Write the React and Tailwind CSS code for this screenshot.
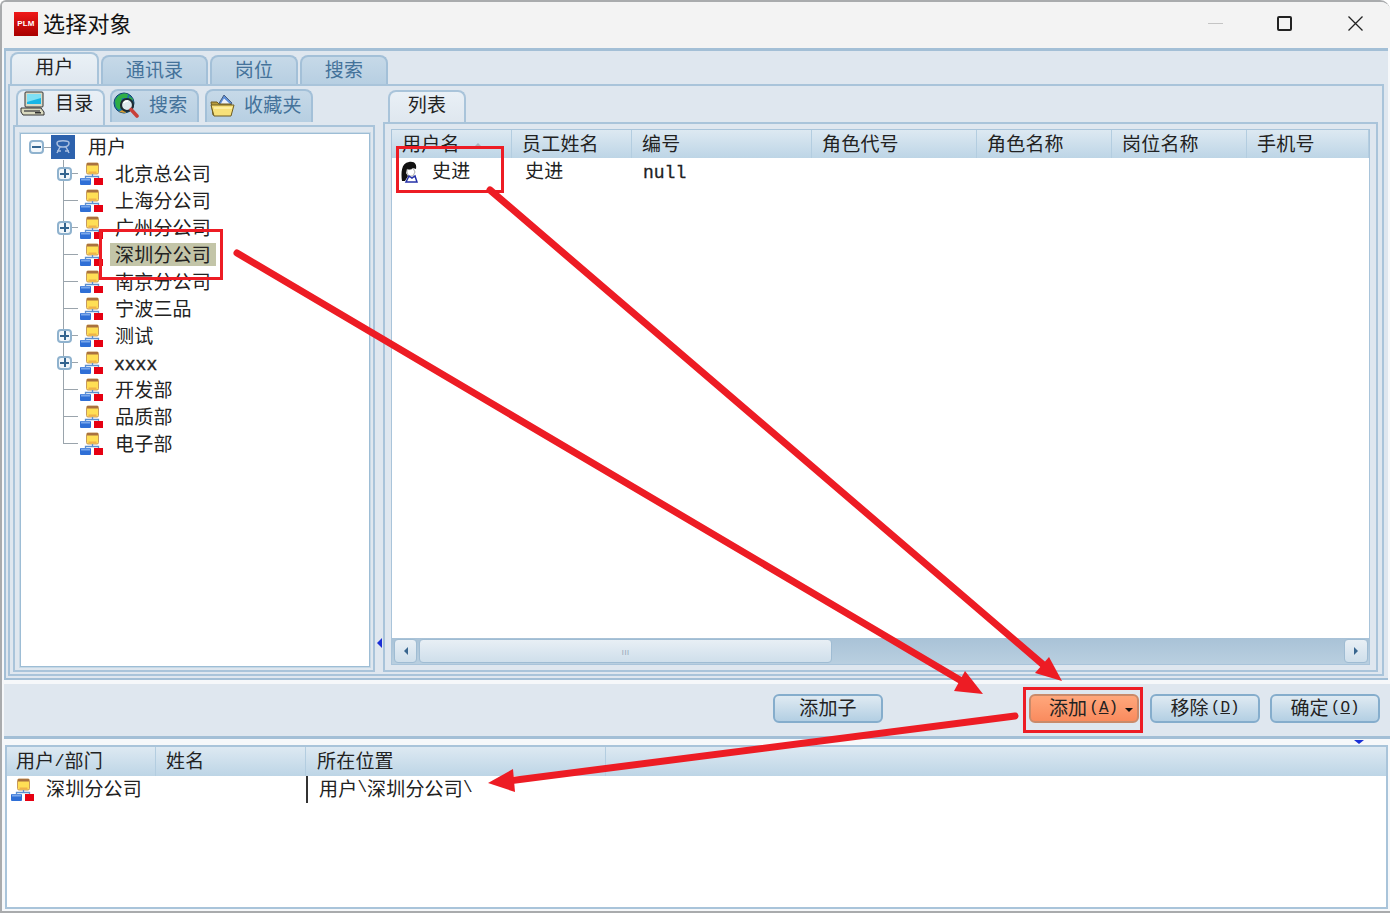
import React from "react";

const OrgIcon = ({ className = "" }) => (
  <svg viewBox="0 0 23 23" className={`w-[23px] h-[23px] shrink-0 ${className}`}>
    <rect x="6.5" y="1" width="12" height="11" rx="1.5" fill="#ffdf55" stroke="#c79a60" />
    <rect x="7" y="1" width="11" height="2.5" fill="#a9713f" />
    <rect x="8.5" y="9.5" width="8" height="2" fill="#f0b24a" />
    <path d="M12.5 12V14.5M5.5 16.5V14.5H18.5V16.5" fill="none" stroke="#5c8fcf" strokeWidth="1.3" />
    <rect x="0" y="16" width="11" height="7" rx="1" fill="#2f6fd6" />
    <rect x="1" y="16.5" width="9" height="2" fill="#7aa7ea" />
    <rect x="14" y="16" width="9" height="7" fill="#e60012" />
  </svg>
);

const Expander = ({ minus }) => (
  <span className="relative flex items-center justify-center w-[15px] h-[14px] bg-[#f2f7fb] border-2 border-[#8fb2ce] rounded-[4px] shrink-0 z-10">
    <span className="absolute w-[9px] h-[2px] bg-[#33648f]" />
    {!minus && <span className="absolute w-[2px] h-[9px] bg-[#33648f]" />}
  </span>
);

const ComputerIcon = () => (
  <svg viewBox="0 0 25 25" className="w-[25px] h-[25px] shrink-0">
    <rect x="5" y="1" width="18" height="15" rx="1" fill="#d6d9c6" stroke="#333" />
    <rect x="7" y="3" width="14" height="10" fill="#18b6e6" />
    <path d="M7 3H21V7L7 11Z" fill="#7fe0f5" />
    <path d="M1 17H21L24 21V24H3L1 21Z" fill="#d9d9bf" stroke="#333" />
    <path d="M4 20H20" stroke="#555" strokeWidth="1.5" />
    <rect x="15" y="21" width="6" height="1.5" fill="#333" />
  </svg>
);

const GlobeIcon = () => (
  <svg viewBox="0 0 26 26" className="w-[26px] h-[26px] shrink-0">
    <circle cx="11" cy="11" r="10" fill="#1d78a8" stroke="#14476b" />
    <path d="M2 9C4 3 10 0 15 2L14 6L9 6L8 10L10 13L6 18L3 15ZM16 4L20 7L19 9L16 8Z" fill="#2fae45" />
    <path d="M6 20L11 17L13 21Z" fill="#e0a030" />
    <circle cx="14" cy="13" r="6" fill="#dde9ee" stroke="#1d2b33" strokeWidth="2.2" />
    <path d="M10.5 11C11.5 9.5 13 9 15 9" stroke="#fff" strokeWidth="1.4" fill="none" />
    <path d="M18 17.5L24 24" stroke="#c8403a" strokeWidth="3.6" strokeLinecap="round" />
  </svg>
);

const FolderIcon = () => (
  <svg viewBox="0 0 25 25" className="w-[25px] h-[25px] shrink-0">
    <path d="M8 12L14 2L22 10L20 13Z" fill="#5d8fd8" stroke="#4a5f80" />
    <path d="M10 12L14 5.5L20 11L19 13Z" fill="#eef2f9" />
    <path d="M1 9H7L9 11H21V22H3Z" fill="#b69b3c" stroke="#6e5d22" />
    <path d="M1 12H24L21 23H4Z" fill="#f7e17a" stroke="#6e5d22" />
    <path d="M4 15H22" stroke="#fff3b0" strokeWidth="1.5" />
  </svg>
);

const RootIcon = () => (
  <svg viewBox="0 0 24 24" className="w-[24px] h-[24px] shrink-0">
    <rect width="24" height="24" fill="#2d62ad" />
    <path d="M6 8C6 5 18 5 18 8C18 11 15 12 12 12C9 12 6 11 6 8ZM9 12L6 18M15 12L18 18M10 16H6M18 16H14" fill="none" stroke="#a9bfe0" strokeWidth="1.5" />
  </svg>
);

const PersonIcon = () => (
  <svg viewBox="0 0 18 22" className="w-[18px] h-[22px] shrink-0">
    <path d="M2 20C1 12 1 2 9 1C15 0 17 4 16 8L13 7C11 9 8 9 7 8L6 12L8 15L5 20Z" fill="#111" />
    <path d="M7 8C9 9 11 9 13 7L15 11L13 15H9L7 12Z" fill="#fff" stroke="#555" strokeWidth="0.5" />
    <path d="M6 21L9 15L12 17L15 15L17 21Z" fill="#fff" stroke="#2430a8" strokeWidth="1.5" />
  </svg>
);

const treeRows = [
  { label: "北京总公司", plus: true },
  { label: "上海分公司" },
  { label: "广州分公司", plus: true },
  { label: "深圳分公司", selected: true },
  { label: "南京分公司" },
  { label: "宁波三品" },
  { label: "测试", plus: true },
  { label: "xxxx", plus: true, mono: true },
  { label: "开发部" },
  { label: "品质部" },
  { label: "电子部", last: true },
];

const TreeRow = ({ r }) => (
  <div className="relative flex items-center h-[27px] pl-[36px]">
    <span className={`absolute left-[42px] top-0 w-[1px] bg-[#9aa4ac] ${r.last ? "h-[14px]" : "h-full"}`} />
    <span className="absolute left-[42px] top-[13px] w-[15px] h-[1px] bg-[#9aa4ac]" />
    <span className="w-[15px] shrink-0 flex items-center">{r.plus && <Expander />}</span>
    <OrgIcon className="ml-[8px] relative" />
    <span
      className={`ml-[7px] h-[23px] whitespace-nowrap ${r.selected ? "bg-[#c3c5a8]" : ""} ${
        r.mono
          ? "font-['Liberation_Mono',monospace] text-[18px] tracking-normal pl-[4px] leading-[29px] [-webkit-text-stroke:0.4px_#222]"
          : "px-[5px] leading-[21px]"
      }`}
    >
      {r.label}
    </span>
  </div>
);

const topTabs = [
  { label: "用户", active: true, w: "w-[89px] h-[32px] pb-[7px]" },
  { label: "通讯录", w: "w-[107px] h-[29px] pb-[5px]" },
  { label: "岗位", w: "w-[88px] h-[29px] pb-[5px]" },
  { label: "搜索", w: "w-[88px] h-[29px] pb-[5px]" },
];

const subTabActive = "bg-gradient-to-b from-[#e9f0f6] to-[#dfe7ef] text-[#222] border-2 border-b-0 border-[#a9c4da] rounded-t-[8px]";
const subTabIdle = "bg-gradient-to-b from-[#c6d9e8] to-[#b7cfe2] text-[#44729a] border-2 border-b-0 border-[#a3c0d8] rounded-t-[8px]";

const listCols = [
  { label: "用户名", w: "w-[120px]", sort: true },
  { label: "员工姓名", w: "w-[120px]" },
  { label: "编号", w: "w-[180px]" },
  { label: "角色代号", w: "w-[165px]" },
  { label: "角色名称", w: "w-[135px]" },
  { label: "岗位名称", w: "w-[135px]" },
  { label: "手机号", w: "flex-1" },
];

const headerBg = "bg-gradient-to-b from-[#dde9f2] to-[#bdd5e6]";
const mono = "font-['Liberation_Mono',monospace] text-[16px] tracking-normal";

const Btn = ({ children, orange, className = "" }) => (
  <div
    className={`w-[110px] h-[29px] flex items-center justify-center pb-[4px] rounded-[6px] border-2 text-[#222] ${
      orange
        ? "border-[#c98a6a] bg-gradient-to-b from-[#ffa77c] to-[#f98b5e] relative"
        : "border-[#85adcc] bg-gradient-to-b from-[#dfeaf2] to-[#b3cfe3]"
    } ${className}`}
  >
    {children}
  </div>
);

const Key = ({ k }) => (
  <span className={`${mono} ml-[2px] mt-[3px]`}>
    (<span className="underline">{k}</span>)
  </span>
);

export default function App() {
  return (
    <div className="relative w-[1390px] h-[913px] overflow-hidden bg-[#f6f8fa] border-t-2 border-l-2 border-b-2 border-[#a9abad] rounded-tr-[10px] rounded-tl-[6px] text-[19px] tracking-[0.2px] leading-none text-[#222] font-['Noto_Sans_CJK_SC','Liberation_Sans',sans-serif]">
      {/* title bar */}
      <div className="flex items-center h-[46px] bg-[#f3f3f3]">
        <div className="ml-[12px] mb-[2px] w-[24px] h-[24px] flex items-center justify-center bg-gradient-to-b from-[#f01818] to-[#a80000] text-white text-[8px] font-bold font-['Liberation_Sans',sans-serif]">
          PLM
        </div>
        <div className="ml-[5px] pb-[6px] text-[22px] text-[#111]">选择对象</div>
        <div className="ml-auto flex items-center pb-[4px]">
          <span className="w-[15px] h-[1px] bg-[#c4c4c4] mr-[54px]" />
          <span className="w-[15px] h-[15px] border-2 border-[#222] rounded-[2px] mr-[56px]" />
          <svg viewBox="0 0 15 15" className="w-[15px] h-[15px] mr-[27px]">
            <path d="M0.5 0.5L14.5 14.5M14.5 0.5L0.5 14.5" stroke="#222" strokeWidth="1.3" />
          </svg>
        </div>
      </div>

      {/* main tab pane */}
      <div className="ml-[2px] w-[1384px] h-[632px] bg-[#dfe7ef] border-t-[3px] border-l-2 border-b-2 border-[#a3bfd6] flex flex-col">
        <div className="flex items-end h-[33px] pl-[4px] gap-[2px] shrink-0">
          {topTabs.map((t) => (
            <div
              key={t.label + t.w}
              className={`${t.w} flex items-center justify-center ${
                t.active
                  ? "bg-gradient-to-b from-[#eaf1f6] to-[#dfe7ef] text-[#222] border-2 border-b-0 border-[#a9c4da] rounded-t-[8px]"
                  : "bg-gradient-to-b from-[#c6d9e8] to-[#b7cfe2] text-[#44729a] border-2 border-b-0 border-[#a3c0d8] rounded-t-[8px]"
              }`}
            >
              {t.label}
            </div>
          ))}
        </div>
        <div className="ml-[2px] w-[1376px] h-[592px] border-2 border-[#a9c4da] flex pl-[3px] pt-[2px] shrink-0">
          {/* left pane */}
          <div className="w-[362px] h-[584px] flex flex-col shrink-0">
            <div className="flex items-end h-[37px] pl-[3px] shrink-0">
              <div className={`w-[89px] h-[36px] flex items-center pb-[9px] ${subTabActive} pl-[2px]`}>
                <ComputerIcon />
                <span className="ml-[10px] mb-[4px] text-[#222]">目录</span>
              </div>
              <div className={`ml-[5px] mb-[3px] w-[89px] h-[33px] flex items-center pb-[3px] ${subTabIdle} pl-[1px]`}>
                <GlobeIcon />
                <span className="ml-[10px] mb-[3px]">搜索</span>
              </div>
              <div className={`ml-[6px] mb-[3px] w-[108px] h-[33px] flex items-center pb-[3px] ${subTabIdle} pl-[3px]`}>
                <FolderIcon />
                <span className="ml-[9px] mb-[3px]">收藏夹</span>
              </div>
            </div>
            <div className="flex-1 border-2 border-[#a9c4da] pl-[5px] pr-[3px] pt-[6px] pb-[3px] min-h-0">
              <div className="w-full h-full bg-white border border-[#9dbdd5] outline outline-1 outline-[#c5d8e6]">
                <div className="flex items-center h-[26px] pl-[8px]">
                  <span className="relative flex items-center">
                    <Expander minus />
                    <span className="w-[7px] h-[1px] bg-[#9aa4ac]" />
                  </span>
                  <RootIcon />
                  <span className="ml-[13px] pb-[4px]">用户</span>
                </div>
                {treeRows.map((r) => (
                  <TreeRow key={r.label} r={r} />
                ))}
              </div>
            </div>
          </div>

          {/* splitter */}
          <div className="w-[8px] h-[584px] shrink-0 flex flex-col justify-end items-center pb-[24px]">
            <span className="w-0 h-0 border-y-[5px] border-y-transparent border-r-[5px] border-r-[#1a2fd6]" />
          </div>

          {/* right pane */}
          <div className="w-[995px] h-[584px] flex flex-col shrink-0">
            <div className="flex items-end h-[34px] pl-[5px] shrink-0">
              <div className={`w-[78px] h-[32px] pb-[8px] flex items-center justify-center ${subTabActive}`}>列表</div>
            </div>
            <div className="flex-1 min-h-0 border-2 border-[#a9c4da] px-[6px] py-[5px]">
              <div className="w-full h-full bg-white border border-[#a9c4da] flex flex-col">
                <div className={`flex h-[28px] shrink-0 ${headerBg}`}>
                  {listCols.map((c) => (
                    <div key={c.label} className={`${c.w} h-full flex items-center pl-[10px] pb-[4px] border-r border-[#b3cde0] whitespace-nowrap`}>
                      {c.label}
                      {c.sort && <span className="ml-[13px] mt-[6px] w-0 h-0 border-x-[5px] border-x-transparent border-b-[5px] border-b-[#a9b4bd]" />}
                    </div>
                  ))}
                </div>
                <div className="flex-1 min-h-0">
                  <div className="flex items-center h-[28px]">
                    <div className="w-[120px] flex items-center pl-[8px]">
                      <PersonIcon />
                      <span className="ml-[14px] pb-[5px]">史进</span>
                    </div>
                    <div className="w-[120px] pl-[13px] pb-[5px]">史进</div>
                    <div className="pl-[11px] pt-[2px] font-['Liberation_Mono',monospace] text-[18px] tracking-normal [-webkit-text-stroke:0.3px_#222]">null</div>
                  </div>
                </div>
                <div className="h-[26px] shrink-0 flex items-center bg-gradient-to-b from-[#a9c2d7] to-[#b9cfe0] pl-[2px] pr-[1px]">
                  <div className="w-[23px] h-[24px] rounded-[4px] border border-[#9fbcd3] bg-gradient-to-b from-[#e8eff5] to-[#cfdfeb] flex items-center justify-center">
                    <span className="w-0 h-0 border-y-[4px] border-y-transparent border-r-[4px] border-r-[#39668f]" />
                  </div>
                  <div className="ml-[2px] w-[413px] h-[24px] rounded-[4px] border border-[#9fbcd3] bg-gradient-to-b from-[#e8eff5] to-[#cfdfeb] flex items-center justify-center text-[#9ab] text-[9px]">
                    ııı
                  </div>
                  <div className="ml-auto w-[24px] h-[24px] rounded-[4px] border border-[#9fbcd3] bg-gradient-to-b from-[#e8eff5] to-[#cfdfeb] flex items-center justify-center">
                    <span className="w-0 h-0 border-y-[4px] border-y-transparent border-l-[4px] border-l-[#39668f]" />
                  </div>
                </div>
              </div>
            </div>
          </div>
        </div>
      </div>

      {/* button bar */}
      <div className="mt-[4px] ml-[2px] w-[1386px] h-[55px] bg-[#dfe7ef] border-b-[3px] border-[#a3bfd6] flex justify-end pt-[10px] pr-[10px]">
        <Btn className="mr-[146px]">添加子</Btn>
        <Btn orange className="mr-[11px]">
          <span className="ml-[-1px]">添加</span>
          <Key k="A" />
          <span className="absolute right-[4px] top-[12px] w-0 h-0 border-x-[4px] border-x-transparent border-t-[4px] border-t-[#111]" />
        </Btn>
        <Btn className="mr-[10px]">
          移除
          <Key k="D" />
        </Btn>
        <Btn>
          确定
          <Key k="O" />
        </Btn>
      </div>

      {/* splitter */}
      <div className="h-[6px] flex justify-end pr-[26px]">
        <span className="mt-[1px] w-0 h-0 border-x-[5px] border-x-transparent border-t-[4px] border-t-[#1a2fd6]" />
      </div>

      {/* bottom table */}
      <div className="ml-[3px] w-[1383px] h-[164px] bg-white border-2 border-[#a9c4da] flex flex-col">
        <div className={`flex h-[29px] shrink-0 ${headerBg}`}>
          <div className="w-[149px] h-full flex items-center pl-[9px] pb-[4px] border-r border-[#b3cde0]">
            用户<span className={`${mono} mt-[3px] text-[17px]`}>/</span>部门
          </div>
          <div className="w-[150px] h-full flex items-center pl-[10px] pb-[4px] border-r border-[#b3cde0]">姓名</div>
          <div className="w-[300px] h-full flex items-center pl-[11px] pb-[4px] border-r border-[#b3cde0]">所在位置</div>
        </div>
        <div className="flex h-[27px]">
          <div className="w-[299px] flex items-center pl-[4px]">
            <OrgIcon />
            <span className="ml-[12px] pb-[4px]">深圳分公司</span>
          </div>
          <div className="flex items-center border-l-2 border-[#333] pl-[11px] pb-[4px] whitespace-nowrap">
            用户<span className={mono}>\</span>深圳分公司<span className={mono}>\</span>
          </div>
        </div>
      </div>

      {/* annotations */}
      <div className="absolute left-[97px] top-[227px] w-[124px] h-[51px] border-[3px] border-[#ed1c24]" />
      <div className="absolute left-[394px] top-[144px] w-[108px] h-[47px] border-[3px] border-[#ed1c24]" />
      <div className="absolute left-[1021px] top-[685px] w-[120px] h-[46px] border-[3px] border-[#ed1c24]" />
      <svg className="absolute left-[-2px] top-[-2px] w-[1390px] h-[913px] pointer-events-none" viewBox="0 0 1390 913">
        <g stroke="#ed1c24" strokeWidth="7" strokeLinecap="round" fill="none">
          <path d="M237 253L965 683" />
          <path d="M490 190L1047 668" />
          <path d="M1015 716L508 781" />
        </g>
        <g fill="#ed1c24">
          <path d="M983 694L965 671L954 691Z" />
          <path d="M1062 681L1049 657L1035 673Z" />
          <path d="M488 783L513 769L515 792Z" />
        </g>
      </svg>
    </div>
  );
}
